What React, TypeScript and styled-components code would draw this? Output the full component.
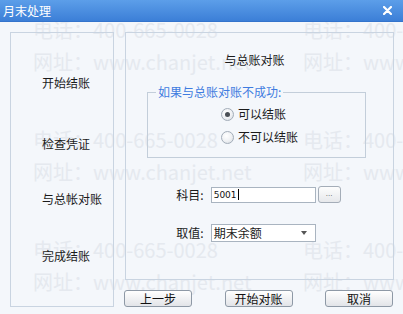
import React from "react";
import styled, { createGlobalStyle } from "styled-components";

const Global = createGlobalStyle`
  html, body { margin: 0; padding: 0; background: #f4f7fb; }
  * { box-sizing: border-box; }
`;

const Window = styled.div`
  position: relative;
  width: 403px;
  height: 314px;
  background: #f4f7fb;
  overflow: hidden;
  display: flex;
  flex-direction: column;
  font-family: "Noto Sans CJK SC", "Noto Sans", sans-serif;
  font-size: 12px;
  line-height: 16px;
  color: #1b1b1b;
`;

const Watermark = styled.div`
  position: absolute;
  inset: 0;
  padding-top: 14px;
  display: flex;
  flex-direction: column;
  gap: 46px;
  pointer-events: none;
  z-index: 0;
`;

const WmGroup = styled.div`
  display: flex;
  flex-direction: column;
`;

const WmLine = styled.div`
  display: flex;
  line-height: 32px;
  font-size: 20px;
  color: #e5e9ef;
  white-space: nowrap;
`;

const WmText = styled.span`
  flex: 0 0 270px;
  padding-left: 33px;
`;

const TitleBar = styled.div`
  position: relative;
  z-index: 1;
  height: 22px;
  flex: 0 0 22px;
  background: linear-gradient(#5c9ee9, #3c7fd7);
  border-bottom: 1px solid #3474cc;
  color: #fff;
  display: flex;
  align-items: center;
  justify-content: space-between;
  padding: 0 11px 0 3px;
`;

const Body = styled.div`
  position: relative;
  z-index: 1;
  flex: 1;
  display: flex;
  padding: 10px 9px 7px 10px;
  gap: 11px;
`;

const StepPanel = styled.div`
  width: 104px;
  height: 275px;
  border: 1px solid #c9d4e1;
  padding: 42px 0 0 31px;
  display: flex;
  flex-direction: column;
`;

const Step = styled.div<{ $gap: number }>`
  margin-top: ${(p) => p.$gap}px;
  white-space: nowrap;
`;

const RightColumn = styled.div`
  flex: 1;
  display: flex;
  flex-direction: column;
  gap: 10px;
`;

const MainPanel = styled.div`
  height: 248px;
  border: 1px solid #c9d4e1;
  padding: 19px 27px 0 21px;
  display: flex;
  flex-direction: column;
`;

const PanelTitle = styled.div`
  text-align: center;
  padding-right: 4px;
`;

const Group = styled.fieldset`
  margin: 16px 0 0 0;
  padding: 6px 0 12px 0;
  border: 1px solid #c3ceda;
  min-inline-size: 0;
  display: flex;
  flex-direction: column;
  align-items: center;
`;

const Legend = styled.legend`
  margin-left: 8px;
  padding: 0 2px;
  color: #3f7ce0;
  line-height: 16px;
`;

const RadioList = styled.div`
  display: flex;
  flex-direction: column;
  gap: 7px;
  margin-left: 6px;
`;

const RadioRow = styled.label`
  display: flex;
  align-items: center;
  gap: 4px;
  height: 16px;
`;

const RadioDot = styled.span<{ $checked?: boolean }>`
  position: relative;
  width: 13px;
  height: 13px;
  border-radius: 50%;
  border: 1px solid #a3adb9;
  background: radial-gradient(circle at 40% 35%, #ffffff 0%, #eef0f3 55%, #d2d7dd 100%);
  &::after {
    content: "";
    display: ${(p) => (p.$checked ? "block" : "none")};
    position: absolute;
    left: 3px;
    top: 3px;
    width: 5px;
    height: 5px;
    border-radius: 50%;
    background: #4a4f55;
  }
`;

const FormGrid = styled.div`
  margin-top: 28px;
  display: grid;
  grid-template-columns: auto 105px 18px;
  column-gap: 7px;
  row-gap: 21px;
  justify-content: center;
  align-items: center;
  padding-left: 4px;
`;

const FieldLabel = styled.span`
  white-space: nowrap;
`;

const TextInput = styled.div`
  height: 16px;
  background: #fff;
  border: 1px solid #a9b4c0;
  display: flex;
  align-items: center;
  padding-left: 2px;
  font-family: "DejaVu Sans", sans-serif;
  font-size: 9px;
  color: #111;
`;

const Caret = styled.span`
  display: inline-block;
  width: 1px;
  height: 11px;
  background: #000;
  margin-left: 1px;
`;

const BrowseButton = styled.div`
  height: 17px;
  margin-left: -5px;
  border: 1px solid #a4adb8;
  border-radius: 3px;
  background: linear-gradient(#fdfdfd, #e6e8eb);
  display: flex;
  align-items: flex-end;
  justify-content: center;
  font-size: 8px;
  line-height: 10px;
  color: #555;
  padding-bottom: 3px;
  font-family: "Liberation Sans", sans-serif;
`;

const Select = styled.div`
  height: 18px;
  background: #fff;
  border: 1px solid #a9b4c0;
  display: flex;
  align-items: center;
  justify-content: space-between;
  padding: 0 8px 0 2px;
`;

const Arrow = styled.span`
  width: 0;
  height: 0;
  border-left: 3.5px solid transparent;
  border-right: 3.5px solid transparent;
  border-top: 4px solid #555;
`;

const ButtonRow = styled.div`
  display: flex;
  justify-content: space-between;
  padding-right: 1px;
  margin-left: -1px;
`;

const Button = styled.button`
  width: 68px;
  height: 17px;
  padding: 0;
  border: 1px solid #8e99a6;
  border-radius: 3px;
  background: linear-gradient(#ffffff, #e2e4e8);
  font-family: inherit;
  font-size: 12px;
  line-height: 14px;
  color: #111;
`;

const wmPhone = "电话：400-665-0028";
const wmSite = "网址：www.chanjet.net";

export default function App() {
  return (
    <>
      <Global />
      <Window>
        <Watermark aria-hidden>
          {[0, 1, 2].map((g) => (
            <WmGroup key={g}>
              <WmLine>
                <WmText>{wmPhone}</WmText>
                <WmText>{wmPhone}</WmText>
              </WmLine>
              <WmLine>
                <WmText>{wmSite}</WmText>
                <WmText>{wmSite}</WmText>
              </WmLine>
            </WmGroup>
          ))}
        </Watermark>
        <TitleBar>
          <span>月末处理</span>
          <svg width="9" height="9" viewBox="0 0 9 9">
            <path d="M1 1 L8 8 M8 1 L1 8" stroke="#fff" strokeWidth="2.2" strokeLinecap="round" />
          </svg>
        </TitleBar>
        <Body>
          <StepPanel>
            <Step $gap={0}>开始结账</Step>
            <Step $gap={45}>检查凭证</Step>
            <Step $gap={39}>与总帐对账</Step>
            <Step $gap={41}>完成结账</Step>
          </StepPanel>
          <RightColumn>
            <MainPanel>
              <PanelTitle>与总账对账</PanelTitle>
              <Group>
                <Legend>如果与总账对账不成功:</Legend>
                <RadioList>
                  <RadioRow>
                    <RadioDot $checked />
                    可以结账
                  </RadioRow>
                  <RadioRow>
                    <RadioDot />
                    不可以结账
                  </RadioRow>
                </RadioList>
              </Group>
              <FormGrid>
                <FieldLabel>科目:</FieldLabel>
                <TextInput>
                  5001
                  <Caret />
                </TextInput>
                <BrowseButton>...</BrowseButton>
                <FieldLabel>取值:</FieldLabel>
                <Select>
                  <span>期末余额</span>
                  <Arrow />
                </Select>
                <span />
              </FormGrid>
            </MainPanel>
            <ButtonRow>
              <Button>上一步</Button>
              <Button>开始对账</Button>
              <Button>取消</Button>
            </ButtonRow>
          </RightColumn>
        </Body>
      </Window>
    </>
  );
}
